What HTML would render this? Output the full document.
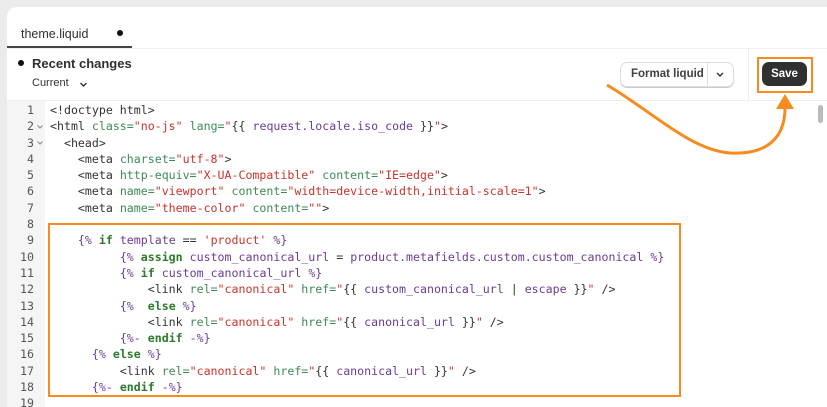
<!DOCTYPE html>
<html><head><style>
body{margin:0;width:827px;height:405px;background:#ebebeb;overflow:hidden;font-family:"Liberation Sans",sans-serif;position:relative}
.card{position:absolute;left:7px;top:7px;width:820px;height:400px;background:#fff;border-radius:10px 0 0 0;overflow:hidden}
.tab{position:absolute;left:14px;top:20px;font-size:12.5px;color:#303030}
.tabdot{position:absolute;left:110px;top:23px;width:6px;height:6px;border-radius:50%;background:#111}
.tabline{position:absolute;left:0;top:39px;width:125px;height:2px;background:#444}
.sep{position:absolute;left:0;top:41px;width:820px;height:1px;background:#eee}
.rc{position:absolute;left:25px;top:49px;font-size:13px;font-weight:bold;color:#303030}
.rcdot{position:absolute;left:11px;top:53px;width:6px;height:6px;border-radius:50%;background:#111}
.cur{position:absolute;left:25px;top:70px;font-size:11px;color:#303030}
.vsep{position:absolute;left:741px;top:41px;width:1px;height:52px;background:#eee}
.fmt{position:absolute;left:613px;top:55px;width:112px;height:23px;border:1px solid #ddd;border-radius:7px;box-shadow:0 1px 0 #ccc;font-size:11.5px;font-weight:bold;color:#404040}
.save{position:absolute;left:755px;top:55px;width:45px;height:24px;background:#303030;border-radius:7px;color:#fff;font-size:11.5px;font-weight:bold;text-align:center;line-height:24px}
.code{position:absolute;left:0;top:93px;width:820px;height:310px;border-top:1px solid #eee}
.gut{position:absolute;left:0;top:0;width:38px;height:310px;background:#f5f5f5}
pre{margin:0;position:absolute;top:1px;font-family:"DejaVu Sans Mono",monospace;font-size:11.6px;line-height:16.3px;color:#333}
.ln{left:0;width:27px;text-align:right;color:#555}
.tx{left:43px}
.a{color:#3d8a55}.s{color:#c8342d}.v{color:#6a3c96}.k{color:#2a7a2a;font-weight:bold}.d{color:#6a3c96}
.obox{position:absolute;left:48px;top:223px;width:633px;height:174px;border:2.5px solid #f68b1f;box-sizing:border-box}
.sb{position:absolute;left:811px;top:4px;width:5px;height:18px;background:#bbb;border-radius:3px}
</style></head><body>
<div class="card">
<div class="tab">theme.liquid</div><div class="tabdot"></div><div class="tabline"></div><div class="sep"></div>
<div class="rcdot"></div><div class="rc">Recent changes</div>
<div class="cur">Current</div>
<svg style="position:absolute;left:72px;top:74px" width="9" height="7"><path d="M1.5 2 L4.5 5 L7.5 2" fill="none" stroke="#333" stroke-width="1.4"/></svg>
<div class="vsep"></div>
<div class="fmt"><span style="position:absolute;left:10px;top:5px">Format liquid</span><span style="position:absolute;left:86px;top:0;width:1px;height:23px;background:#ddd"></span><svg style="position:absolute;left:94px;top:8px" width="10" height="8"><path d="M2 2 L5 5 L8 2" fill="none" stroke="#333" stroke-width="1.4"/></svg></div>
<div class="save">Save</div>
<div class="code">
<div class="gut"></div>
<pre class="ln">1
2
3
4
5
6
7
8
9
10
11
12
13
14
15
16
17
18
19</pre>
<svg style="position:absolute;left:29px;top:23px" width="8" height="22"><path d="M1.5 1.5 L4 4 L6.5 1.5 M1.5 17.5 L4 20 L6.5 17.5" fill="none" stroke="#888" stroke-width="1"/></svg>
<pre class="tx">&lt;!doctype html&gt;
&lt;html <span class="a">class=</span><span class="s">"no-js"</span> <span class="a">lang=</span><span class="s">"</span>{{ <span class="v">request.locale.iso_code</span> }}<span class="s">"</span>&gt;
  &lt;head&gt;
    &lt;meta <span class="a">charset=</span><span class="s">"utf-8"</span>&gt;
    &lt;meta <span class="a">http-equiv=</span><span class="s">"X-UA-Compatible"</span> <span class="a">content=</span><span class="s">"IE=edge"</span>&gt;
    &lt;meta <span class="a">name=</span><span class="s">"viewport"</span> <span class="a">content=</span><span class="s">"width=device-width,initial-scale=1"</span>&gt;
    &lt;meta <span class="a">name=</span><span class="s">"theme-color"</span> <span class="a">content=</span><span class="s">""</span>&gt;

    <span class="d">{%</span> <span class="k">if</span> <span class="v">template</span> == <span class="s">'product'</span> <span class="d">%}</span>
          <span class="d">{%</span> <span class="k">assign</span> <span class="v">custom_canonical_url</span> = <span class="v">product.metafields.custom.custom_canonical</span> <span class="d">%}</span>
          <span class="d">{%</span> <span class="k">if</span> <span class="v">custom_canonical_url</span> <span class="d">%}</span>
              &lt;link <span class="a">rel=</span><span class="s">"canonical"</span> <span class="a">href=</span><span class="s">"</span>{{ <span class="v">custom_canonical_url</span> | <span class="v">escape</span> }}<span class="s">"</span> /&gt;
          <span class="d">{%</span>  <span class="k">else</span> <span class="d">%}</span>
              &lt;link <span class="a">rel=</span><span class="s">"canonical"</span> <span class="a">href=</span><span class="s">"</span>{{ <span class="v">canonical_url</span> }}<span class="s">"</span> /&gt;
          <span class="d">{%-</span> <span class="k">endif</span> <span class="d">-%}</span>
      <span class="d">{%</span> <span class="k">else</span> <span class="d">%}</span>
          &lt;link <span class="a">rel=</span><span class="s">"canonical"</span> <span class="a">href=</span><span class="s">"</span>{{ <span class="v">canonical_url</span> }}<span class="s">"</span> /&gt;
      <span class="d">{%-</span> <span class="k">endif</span> <span class="d">-%}</span>
</pre>
<div class="sb"></div>
</div>
</div>
<div class="obox"></div>
<div style="position:absolute;left:757px;top:57px;width:56px;height:36px;border:2.5px solid #f68b1f;box-sizing:border-box"></div>
<svg style="position:absolute;left:0;top:0" width="827" height="405">
<path d="M607 85 C650 110,690 150,730 153 C770 155,785 135,785 108" fill="none" stroke="#f68b1f" stroke-width="3"/>
<path d="M776 109 L785 94 L794 109 Z" fill="#f68b1f"/>
</svg>
</body></html>
